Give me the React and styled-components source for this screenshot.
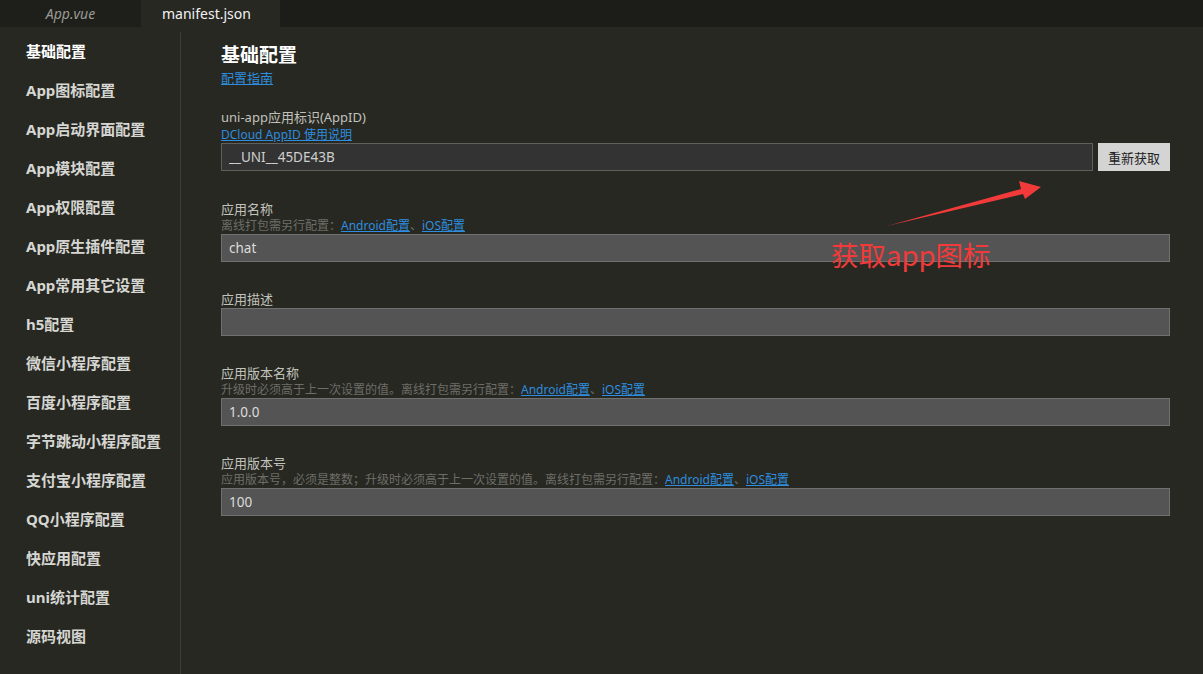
import React from "react";
import styled, { createGlobalStyle } from "styled-components";

const GlobalStyle = createGlobalStyle`
  html, body { margin: 0; padding: 0; background: #272822; }
  body {
    font-family: "Segoe UI", "Noto Sans", "Noto Sans CJK SC", sans-serif;
    color: #c8c8c8;
  }
  * { box-sizing: border-box; }
`;

const Frame = styled.div`
  display: flex;
  flex-direction: column;
  height: 100vh;
  overflow: hidden;
  background: #272822;
`;

const TabBar = styled.div`
  display: flex;
  height: 27px;
  flex-shrink: 0;
  background: #1c1d19;
`;

const Tab = styled.div`
  width: ${(p) => (p.$active ? "139px" : "141px")};
  display: flex;
  align-items: center;
  justify-content: ${(p) => (p.$active ? "flex-start" : "center")};
  padding-left: ${(p) => (p.$active ? "21px" : "0")};
  padding-bottom: 1px;
  font-size: 14px;
  font-style: ${(p) => (p.$active ? "normal" : "italic")};
  color: ${(p) => (p.$active ? "#f2f2f2" : "#9a9a94")};
  background: ${(p) => (p.$active ? "#272822" : "#1e1f1b")};
`;

const Body = styled.div`
  flex: 1;
  display: flex;
  min-height: 0;
`;

const Sidebar = styled.nav`
  width: 181px;
  flex-shrink: 0;
  margin-top: 5px;
  border-right: 1px solid #3b3c36;
  display: flex;
  flex-direction: column;
`;

const NavItem = styled.div`
  height: 39px;
  line-height: 39px;
  padding-left: 26px;
  font-size: 15px;
  font-weight: 700;
  color: ${(p) => (p.$active ? "#ffffff" : "#d6d6d2")};
  white-space: nowrap;
`;

const Main = styled.main`
  position: relative;
  flex: 1;
  padding: 16px 33px 0 40px;
`;

const Title = styled.h1`
  margin: 0;
  font-size: 19px;
  line-height: 24px;
  font-weight: 700;
  color: #ffffff;
`;

const Link = styled.a`
  color: #2e8ddf;
  text-decoration: underline;
  cursor: pointer;
`;

const GuideLine = styled.div`
  margin-top: 3px;
  font-size: 13px;
  line-height: 16px;
`;

const Section = styled.section`
  margin-top: ${(p) => p.$gap || 28}px;
`;

const Label = styled.div`
  font-size: 13px;
  line-height: 18px;
  color: #c2c2bd;
`;

const Hint = styled.div`
  font-size: 12px;
  line-height: ${(p) => p.$lh || 16}px;
  color: #6e6e69;
  white-space: nowrap;
`;

const Row = styled.div`
  display: flex;
  gap: 5px;
`;

const Input = styled.input`
  display: block;
  flex: 1;
  width: 100%;
  height: 28px;
  margin: 0;
  padding: 0 7px;
  font-family: inherit;
  font-size: 13.5px;
  color: ${(p) => (p.$dark ? "#cfcfcf" : "#dcdcdc")};
  background: ${(p) => (p.$dark ? "#333333" : "#545454")};
  border: 1px solid ${(p) => (p.$dark ? "#5f5f5c" : "#707070")};
  border-radius: 0;
  outline: none;
`;

const Button = styled.button`
  width: 72px;
  height: 28px;
  flex-shrink: 0;
  margin: 0;
  padding: 0;
  border: none;
  border-radius: 0;
  background: #d4d4d4;
  color: #222;
  font-family: inherit;
  font-size: 13px;
`;

const ArrowSvg = styled.svg`
  position: absolute;
  left: 704px;
  top: 153px;
  pointer-events: none;
`;

const Annotation = styled.div`
  position: absolute;
  left: 650px;
  top: 211px;
  font-family: "Noto Sans CJK SC", "Noto Sans", sans-serif;
  font-size: 27.5px;
  line-height: 32px;
  color: #f23a3a;
  white-space: nowrap;
  pointer-events: none;
`;

const navItems = [
  "基础配置",
  "App图标配置",
  "App启动界面配置",
  "App模块配置",
  "App权限配置",
  "App原生插件配置",
  "App常用其它设置",
  "h5配置",
  "微信小程序配置",
  "百度小程序配置",
  "字节跳动小程序配置",
  "支付宝小程序配置",
  "QQ小程序配置",
  "快应用配置",
  "uni统计配置",
  "源码视图",
];

const PlatformLinks = () => (
  <>
    <Link>Android配置</Link>、<Link>iOS配置</Link>
  </>
);

export default function App() {
  return (
    <>
      <GlobalStyle />
      <Frame>
        <TabBar>
          <Tab>App.vue</Tab>
          <Tab $active>manifest.json</Tab>
        </TabBar>
        <Body>
          <Sidebar>
            {navItems.map((item, i) => (
              <NavItem key={item} $active={i === 0}>
                {item}
              </NavItem>
            ))}
          </Sidebar>
          <Main>
            <Title>基础配置</Title>
            <GuideLine>
              <Link>配置指南</Link>
            </GuideLine>

            <Section $gap={22}>
              <Label>uni-app应用标识(AppID)</Label>
              <Hint $lh={17}>
                <Link>DCloud AppID 使用说明</Link>
              </Hint>
              <Row>
                <Input $dark readOnly defaultValue="__UNI__45DE43B" />
                <Button>重新获取</Button>
              </Row>
            </Section>

            <Section $gap={29}>
              <Label>应用名称</Label>
              <Hint>
                离线打包需另行配置：<PlatformLinks />
              </Hint>
              <Input readOnly defaultValue="chat" />
            </Section>

            <Section $gap={28}>
              <Label>应用描述</Label>
              <Input readOnly defaultValue="" />
            </Section>

            <Section $gap={28}>
              <Label>应用版本名称</Label>
              <Hint>
                升级时必须高于上一次设置的值。离线打包需另行配置：<PlatformLinks />
              </Hint>
              <Input readOnly defaultValue="1.0.0" />
            </Section>

            <Section $gap={28}>
              <Label>应用版本号</Label>
              <Hint>
                应用版本号，必须是整数；升级时必须高于上一次设置的值。离线打包需另行配置：
                <PlatformLinks />
              </Hint>
              <Input readOnly defaultValue="100" />
            </Section>

            <ArrowSvg width="160" height="50" viewBox="0 0 160 50">
              <polygon
                points="2,46 136,9 134,1 156,7 140,19 138,14"
                fill="#f23a3a"
              />
            </ArrowSvg>
            <Annotation>获取app图标</Annotation>
          </Main>
        </Body>
      </Frame>
    </>
  );
}
